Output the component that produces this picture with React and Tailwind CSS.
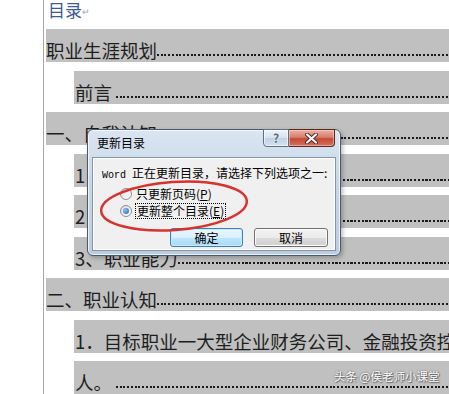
import React from "react";

function Dots() {
  return (
    <div className="flex-1 min-w-0 h-[2px] self-end mb-[6px] bg-[repeating-linear-gradient(90deg,#1a1a1a_0px,#1a1a1a_2px,transparent_2px,transparent_3.75px)]" />
  );
}

function Row({ indent, text, dots = true }) {
  return (
    <div
      className={
        indent
          ? "flex h-[33px] bg-[#c0c0c0] ml-[30px] pl-px overflow-hidden"
          : "flex h-[33px] bg-[#c0c0c0] ml-[2px] overflow-hidden"
      }
    >
      <span className="self-end pb-[3px] leading-[18px] text-[18.5px] text-[#1e1e1e] whitespace-pre shrink-0">
        {text}
      </span>
      {dots && <Dots />}
    </div>
  );
}

function Radio({ checked }) {
  return (
    <span className="w-[12px] h-[12px] rounded-full border border-[#8a8e94] bg-[linear-gradient(135deg,#d8dbe0,#ffffff)] flex items-center justify-center shrink-0">
      {checked && (
        <span className="w-[6px] h-[6px] rounded-full bg-[radial-gradient(circle_at_35%_35%,#8fc0f0,#1f5fb0)]" />
      )}
    </span>
  );
}

export default function App() {
  return (
    <div className="relative w-[449px] h-[394px] overflow-hidden bg-white font-['Noto_Sans_CJK_SC',sans-serif]">
      <div className="flex h-full">
        <div className="w-[43px] shrink-0 border-r border-[#a8a8a8] box-content" />
        <div className="flex-1 flex flex-col min-w-0">
          <div className="h-[29px] pl-[4px] pt-px flex items-start">
            <span className="text-[17px] leading-[18px] text-[#3a5b96]">目录</span>
            <span className="text-[9px] leading-[18px] text-[#9aa5b5] mt-[2px]">↵</span>
          </div>
          <div className="flex flex-col gap-[8.5px]">
            <Row text="职业生涯规划" />
            <Row indent text="前言 " />
            <Row text="一、自我认知" />
            <Row indent text="1．兴趣爱好" />
            <Row indent text="2．性格特点" />
            <Row indent text="3、职业能力" />
            <Row text="二、职业认知" />
            <Row indent text="1．目标职业一大型企业财务公司、金融投资控股" dots={false} />
            <Row indent text="人。 " />
          </div>
        </div>
      </div>

      {/* Dialog */}
      <div className="absolute left-[87px] top-[129px] w-[254px] h-[127px] rounded-[6px] border border-[#4a5a6d] bg-[linear-gradient(180deg,#dae5f1_0%,#c9d8e8_40%,#bccde0_100%)] shadow-[inset_0_0_0_1px_rgba(255,255,255,0.7),2px_2px_4px_rgba(0,0,0,0.25)] flex flex-col text-[12px] text-black">
        <div className="h-[27px] flex items-start">
          <span className="pl-[9px] pt-[6px] leading-[14px]">更新目录</span>
          <div className="ml-auto mr-[5px] -mt-px flex">
            <div className="w-[26px] h-[18px] rounded-bl-[4px] border border-[#5f6f82] bg-[linear-gradient(180deg,#eef3f9_0%,#d6e1ee_50%,#c2d2e4_51%,#d3e0ee_100%)] flex items-center justify-center shadow-[inset_0_0_0_1px_rgba(255,255,255,0.6)]">
              <span className="text-[12px] leading-none font-bold text-[#5a6a80] [text-shadow:0_0_2px_#fff]">?</span>
            </div>
            <div className="w-[46px] h-[18px] rounded-br-[4px] border border-l-0 border-[#5a2a22] bg-[linear-gradient(180deg,#eab0a3_0%,#d8806d_45%,#c44a35_55%,#d5705c_100%)] flex items-center justify-center shadow-[inset_0_0_0_1px_rgba(255,220,210,0.5)]">
              <svg width="13" height="11" viewBox="0 0 13 11">
                <path d="M2 1.5 L11 9.5 M11 1.5 L2 9.5" stroke="#5a2020" strokeWidth="4" strokeLinecap="round" />
                <path d="M2 1.5 L11 9.5 M11 1.5 L2 9.5" stroke="#ffffff" strokeWidth="2.2" strokeLinecap="round" />
              </svg>
            </div>
          </div>
        </div>
        <div className="mx-[4px] h-[94px] border border-[#8394a8] bg-[#f0f0f0] shadow-[inset_0_0_0_1px_#ffffff] flex flex-col">
          <div className="pl-[9px] pt-[8px] leading-[14px] whitespace-nowrap">
            <span className="font-['Liberation_Mono',monospace] text-[10px]">Word </span>
            <span>正在更新目录，请选择下列选项之一:</span>
          </div>
          <div className="pl-[27px] pt-[4px] flex flex-col gap-[3px]">
            <div className="flex items-center gap-[4px] h-[14px]">
              <Radio />
              <span className="leading-[14px]">
                只更新页码(<span className="underline">P</span>)
              </span>
            </div>
            <div className="flex items-center gap-[3px] h-[14px]">
              <Radio checked />
              <span className="leading-[14px] px-px border border-dotted border-black">
                更新整个目录(<span className="underline">E</span>)
              </span>
            </div>
          </div>
          <div className="mt-[10px] pr-[7px] flex justify-end gap-[11px]">
            <button className="w-[73px] h-[19px] rounded-[3px] border border-[#3c7fb1] bg-[linear-gradient(180deg,#eaf6fd_0%,#d9f0fc_50%,#bee6fd_51%,#a7d9f5_100%)] shadow-[inset_0_0_0_1px_#c6ecff] text-[12px] leading-[17px] text-black">
              确定
            </button>
            <button className="w-[74px] h-[19px] rounded-[3px] border border-[#707070] bg-[linear-gradient(180deg,#f2f2f2_0%,#ebebeb_50%,#dddddd_51%,#cfcfcf_100%)] shadow-[inset_0_0_0_1px_#fcfcfc] text-[12px] leading-[17px] text-black">
              取消
            </button>
          </div>
        </div>
      </div>

      {/* red hand-drawn ellipse */}
      <svg className="absolute left-[95px] top-[172px]" width="160" height="68" viewBox="0 0 160 68">
        <ellipse cx="79" cy="34" rx="73" ry="24" transform="rotate(-4 79 34)" fill="none" stroke="#d8322e" strokeWidth="2.5" />
      </svg>

      {/* watermark */}
      <div className="absolute left-[334px] top-[369px] text-[11.5px] leading-[14px] text-white whitespace-nowrap [text-shadow:0_0_2px_#555,1px_1px_1px_#666]">
        头条 @侯老师小课堂
      </div>
    </div>
  );
}
